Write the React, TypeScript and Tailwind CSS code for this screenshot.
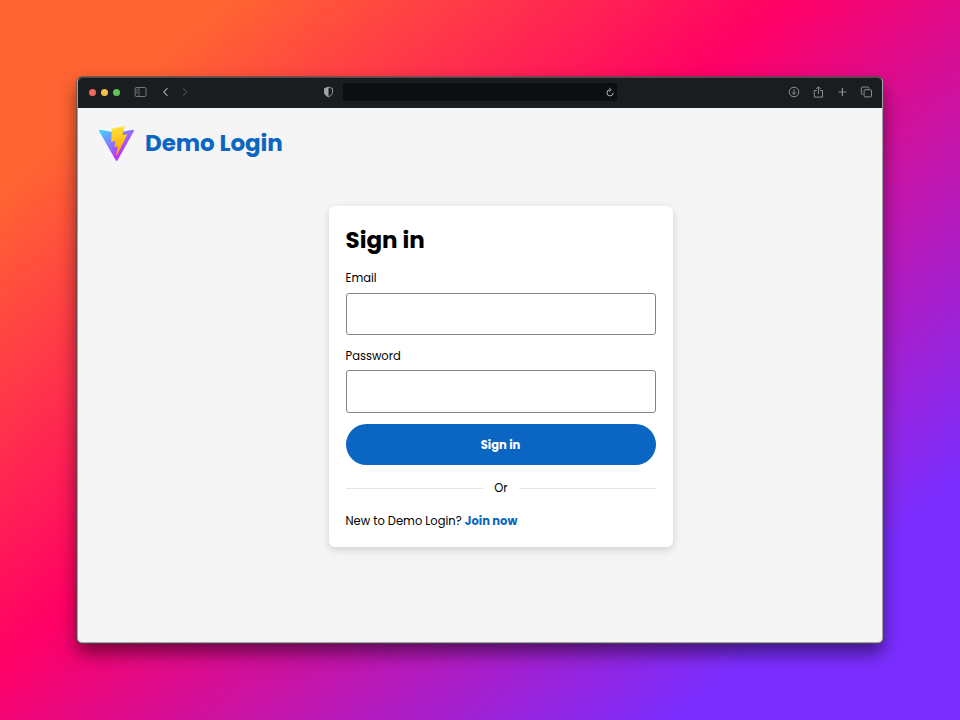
function ViteLogo() {
  return (
    <svg className="h-[35px] w-[35px] shrink-0" viewBox="0 0 256 257" aria-hidden="true">
      <defs>
        <linearGradient id="shield" x1="-.828%" x2="57.636%" y1="7.652%" y2="78.411%">
          <stop offset="0%" stopColor="#41D1FF" />
          <stop offset="100%" stopColor="#BD34FE" />
        </linearGradient>
        <linearGradient id="bolt" x1="43.376%" x2="50.316%" y1="2.242%" y2="89.03%">
          <stop offset="0%" stopColor="#FFEA83" />
          <stop offset="8.333%" stopColor="#FFDD35" />
          <stop offset="100%" stopColor="#FFA800" />
        </linearGradient>
      </defs>
      <path fill="url(#shield)" d="M255.153 37.938L134.897 252.976c-2.483 4.44-8.862 4.466-11.382.048L.875 37.958c-2.746-4.814 1.371-10.646 6.827-9.67l120.385 21.517a6.537 6.537 0 0 0 2.322-.004l117.867-21.483c5.438-.991 9.574 4.796 6.877 9.62Z" />
      <path fill="url(#bolt)" d="M185.432.063L96.44 17.501a3.268 3.268 0 0 0-2.634 3.014l-5.474 92.456a3.268 3.268 0 0 0 3.997 3.378l24.777-5.718c2.318-.535 4.413 1.507 3.936 3.838l-7.361 36.047c-.495 2.426 1.782 4.5 4.151 3.78l15.304-4.649c2.372-.72 4.652 1.36 4.15 3.788l-11.698 56.621c-.732 3.542 3.979 5.473 5.943 2.437l1.313-2.028l72.516-144.72c1.215-2.423-.88-5.186-3.54-4.672l-25.505 4.922c-2.396.462-4.435-1.77-3.759-4.114l16.646-57.705c.677-2.35-1.37-4.583-3.769-4.113Z" />
    </svg>
  );
}

function TitleBar() {
  return (
    <header className="flex h-[30px] shrink-0 items-center bg-[#1a1d1f] pb-[2px] text-[#8c8f91]">
      <div className="ml-[11px] flex gap-[5px]">
        <span className="size-[7px] rounded-full bg-[#ed6a5e]" />
        <span className="size-[7px] rounded-full bg-[#f5bf4f]" />
        <span className="size-[7px] rounded-full bg-[#61c554]" />
      </div>
      <svg className="ml-[14px] h-3 w-[13px] text-[#75787a]" viewBox="0 0 13 12" fill="none" stroke="currentColor">
        <rect x="1.2" y="1.5" width="10.8" height="9" rx="1.2" />
        <path d="M5 1.5v9M2.2 3.5h1.5M2.2 5.3h1.5M2.2 7h1.5" strokeWidth=".9" />
      </svg>
      <svg className="ml-[15px] h-[10px] w-[7px] text-[#a0a3a5]" viewBox="0 0 7 10" fill="none" stroke="currentColor">
        <path d="M5.5 1.2L1.7 5l3.8 3.8" strokeWidth="1.1" />
      </svg>
      <svg className="ml-[13px] h-[10px] w-[7px] text-[#45484a]" viewBox="0 0 7 10" fill="none" stroke="currentColor">
        <path d="M1 1.2L4.8 5 1 8.8" strokeWidth="1.1" />
      </svg>
      <svg className="ml-[134px] h-[12px] w-[11px] text-[#a2a5a7]" viewBox="0 0 11 12" fill="none" stroke="currentColor">
        <path d="M5.5 1.1L9.5 2.5v4c0 2-1.8 3.4-4 4.3-2.2-.9-4-2.3-4-4.3v-4z" strokeWidth=".9" />
        <path d="M5.5 1.1v9.7C3.3 9.9 1.5 8.5 1.5 6.5v-4z" fill="currentColor" stroke="none" />
      </svg>
      <div className="ml-[9px] flex h-[18px] w-[274px] items-center justify-end rounded-[3px] bg-[#0c0f11] pr-[3px]">
        <svg className="h-[10px] w-[8px] text-[#b0b3b5]" viewBox="0 0 8 10" fill="none" stroke="currentColor">
          <path d="M4.2 2.8A3.05 3.05 0 1 0 7.1 5.8" />
          <path d="M3.2.8l2 2-2 2" strokeWidth=".9" />
        </svg>
      </div>
      <div className="mr-[10px] ml-auto flex items-center gap-3">
        <svg className="size-3" viewBox="0 0 12 12" fill="none" stroke="currentColor">
          <circle cx="6" cy="6" r="4.8" />
          <path d="M6 3.3v5M3.9 6.3L6 8.4l2.1-2.1" />
        </svg>
        <svg className="size-3" viewBox="0 0 12 12" fill="none" stroke="currentColor">
          <path d="M4.7 4.5H2.3v6.6h8.2V4.5H8.1M6.4 8V1M4.2 3l2.2-2.2L8.6 3" />
        </svg>
        <svg className="size-3" viewBox="0 0 12 12" fill="none" stroke="currentColor">
          <path d="M6.4 2v8M2.4 6h8" strokeWidth="1.2" />
        </svg>
        <svg className="size-3" viewBox="-0.4 0 12 12" fill="none" stroke="currentColor">
          <rect x="3.7" y="3.7" width="7.4" height="7.2" rx="1" />
          <path d="M2.5 8.3h-.8a.8.8 0 0 1-.8-.8V1.9c0-.5.3-.9.8-.9h5.8c.5 0 .8.3.8.8v.8" />
        </svg>
      </div>
    </header>
  );
}

export default function App() {
  return (
    <div className="h-[720px] w-[960px] overflow-hidden bg-[linear-gradient(140deg,rgb(255,100,50)_12.8%,rgb(255,0,101)_43.52%,rgb(123,46,255)_84.34%)] px-[77px] pt-[77px] font-['Poppins','Inter',sans-serif] text-black">
      <div className="flex h-[566px] flex-col overflow-hidden rounded-[5px] border border-[#a0a2a3] border-t-[#4b4d50] bg-[#f5f5f5] shadow-[0_0_0_1px_rgba(75,80,80,0.65),0_10px_18px_rgba(0,0,0,0.5)]">
        <TitleBar />
        <main>
          <div className="flex items-center pt-[17px] pl-[21px]">
            <ViteLogo />
            <h1 className="ml-[11px] text-[23px] leading-9 font-bold tracking-[-0.06px] text-[#0a66c2]">Demo Login</h1>
          </div>
          <section className="mt-[45px] ml-[250.5px] h-[340.5px] w-[344.5px] rounded-[6px] bg-white pt-[16px] pr-[17px] pl-[17.5px] shadow-[0_3px_9px_rgba(0,0,0,0.15)]">
            <h2 className="-ml-[0.5px] h-9 text-[23px] leading-9 font-bold">Sign in</h2>
            <label className="mt-[11px] block">
              <span className="-ml-[0.5px] block h-[18px] text-[11.5px] leading-[18px]">Email</span>
              <input type="email" className="mt-[6px] block h-[42px] w-full rounded-[3px] border border-[#858585] bg-white px-3 outline-none" />
            </label>
            <label className="mt-3 block">
              <span className="-ml-[0.5px] block h-[18px] text-[11.5px] leading-[18px]">Password</span>
              <input type="password" className="mt-[5px] block h-[43px] w-full rounded-[3px] border border-[#858585] bg-white px-3 outline-none" />
            </label>
            <button className="mt-[11px] block h-[41px] w-full rounded-full bg-[#0a66c2] pt-[2px] pr-px text-[11.5px] font-bold text-white">Sign in</button>
            <div className="mt-[14px] flex h-[18px] items-center gap-[11px] text-[11.5px]">
              <span className="h-px flex-1 bg-[#e5e5e5]" />
              <span className="leading-[18px]">Or</span>
              <span className="h-px flex-1 bg-[#e5e5e5]" />
            </div>
            <p className="mt-[15px] -ml-[0.5px] text-[11.5px] leading-[18px]">
              New to Demo Login? <a className="font-bold text-[#0a66c2]">Join now</a>
            </p>
          </section>
        </main>
      </div>
    </div>
  );
}
